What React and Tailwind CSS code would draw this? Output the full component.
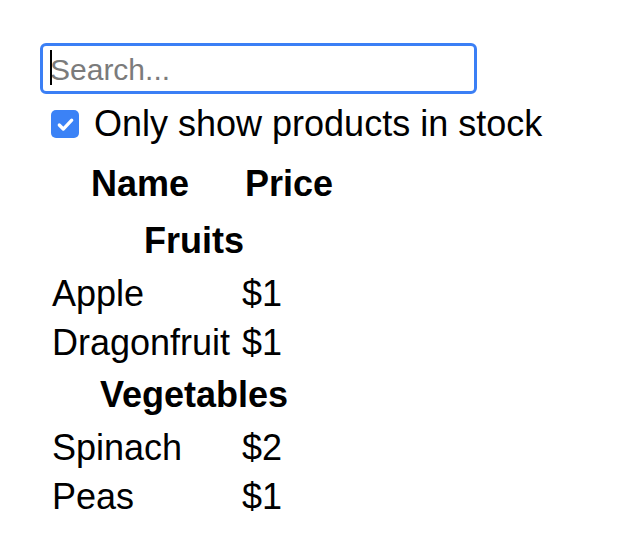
import { useState } from "react";

const PRODUCTS = [
  { category: "Fruits", price: "$1", stocked: true, name: "Apple" },
  { category: "Fruits", price: "$1", stocked: true, name: "Dragonfruit" },
  { category: "Fruits", price: "$2", stocked: false, name: "Passionfruit" },
  { category: "Vegetables", price: "$2", stocked: true, name: "Spinach" },
  { category: "Vegetables", price: "$4", stocked: false, name: "Pumpkin" },
  { category: "Vegetables", price: "$1", stocked: true, name: "Peas" },
];

function SearchBar({ filterText, inStockOnly, onFilterTextChange, onInStockOnlyChange }) {
  return (
    <form onSubmit={(e) => e.preventDefault()}>
      <div className="relative h-[51px] w-[437px] rounded-[6px] border-[3.5px] border-[#3b7ff5]">
        <input
          type="text"
          value={filterText}
          placeholder="Search..."
          onChange={(e) => onFilterTextChange(e.target.value)}
          className="h-full w-full bg-transparent pl-[7px] pt-[3px] text-[30px] text-black outline-none placeholder:text-[#7b7b7b]"
        />
        {/* caret */}
        {!filterText && <span className="pointer-events-none absolute left-[7px] top-[4px] h-[35px] w-[2px] bg-black" />}
      </div>
      <label className="mt-[10px] flex h-[40px] items-center pl-[11px]">
        <input
          type="checkbox"
          className="sr-only"
          checked={inStockOnly}
          onChange={(e) => onInStockOnlyChange(e.target.checked)}
        />
        <span
          className={`flex h-[28px] w-[28px] shrink-0 items-center justify-center rounded-[5px] ${
            inStockOnly ? "bg-[#3b82f6]" : "border-2 border-gray-500 bg-white"
          }`}
        >
          {inStockOnly && (
            <svg viewBox="0 0 24 24" className="h-[23px] w-[23px]" fill="none" stroke="white" strokeWidth="3.4" strokeLinecap="round" strokeLinejoin="round">
              <path d="M5.5 12.5l4.2 4.2L18.5 7.5" />
            </svg>
          )}
        </span>
        <span className="ml-[15px] text-[36px] leading-none">Only show products in stock</span>
      </label>
    </form>
  );
}

function ProductTable({ products, filterText, inStockOnly }) {
  const rows = [];
  let lastCategory = null;

  products.forEach((p) => {
    if (p.name.toLowerCase().indexOf(filterText.toLowerCase()) === -1) return;
    if (inStockOnly && !p.stocked) return;
    if (p.category !== lastCategory) {
      rows.push(
        <tr key={p.category} className="h-[56px]">
          <th colSpan="2" className="p-0 text-center font-bold">
            {p.category}
          </th>
        </tr>
      );
    }
    rows.push(
      <tr key={p.name} className="h-[49px]">
        <td className="whitespace-nowrap p-0 pl-[2px]">{p.name}</td>
        <td className="p-0 pl-[4px]">{p.price}</td>
      </tr>
    );
    lastCategory = p.category;
  });

  return (
    <table className="ml-[10px] mt-[10px] border-collapse text-[36px] leading-none">
      <thead>
        <tr className="h-[59px]">
          <th className="w-[188px] p-0 pr-[8px] text-center font-bold">Name</th>
          <th className="w-[100px] p-0 pl-[2px] text-center font-bold">Price</th>
        </tr>
      </thead>
      <tbody>{rows}</tbody>
    </table>
  );
}

export default function App() {
  const [filterText, setFilterText] = useState("");
  const [inStockOnly, setInStockOnly] = useState(true);

  return (
    <div className="min-h-[558px] bg-white pl-[40px] pt-[43px] font-['Liberation_Sans',Arial,sans-serif] text-black">
      <SearchBar
        filterText={filterText}
        inStockOnly={inStockOnly}
        onFilterTextChange={setFilterText}
        onInStockOnlyChange={setInStockOnly}
      />
      <ProductTable products={PRODUCTS} filterText={filterText} inStockOnly={inStockOnly} />
    </div>
  );
}
